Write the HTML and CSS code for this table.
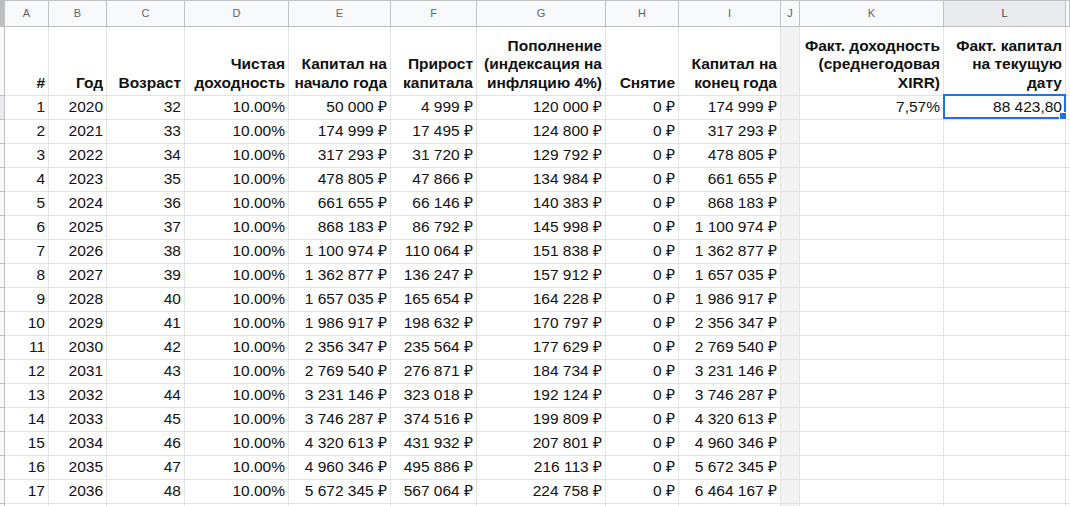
FILE: index.html
```html
<!DOCTYPE html>
<html lang="ru">
<head>
<meta charset="utf-8">
<title>Sheet</title>
<link rel="stylesheet" href="styles.css">
</head>
<body>
<div class="sheet">
  <div class="row colhead">
    <div class="strip"></div>
    <div class="cell">A</div><div class="cell">B</div><div class="cell">C</div><div class="cell">D</div>
    <div class="cell">E</div><div class="cell">F</div><div class="cell">G</div><div class="cell">H</div>
    <div class="cell">I</div><div class="cell">J</div><div class="cell">K</div><div class="cell active">L</div>
    <div class="cell"></div>
  </div>
  <div class="row title">
    <div class="strip"></div>
    <div class="cell">#</div>
    <div class="cell">Год</div>
    <div class="cell">Возраст</div>
    <div class="cell">Чистая<br>доходность</div>
    <div class="cell">Капитал на<br>начало года</div>
    <div class="cell">Прирост<br>капитала</div>
    <div class="cell">Пополнение<br>(индексация на<br>инфляцию 4%)</div>
    <div class="cell">Снятие</div>
    <div class="cell">Капитал на<br>конец года</div>
    <div class="cell gap"></div>
    <div class="cell">Факт. доходность<br>(среднегодовая<br>XIRR)</div>
    <div class="cell">Факт. капитал<br>на текущую<br>дату</div>
    <div class="cell"></div>
  </div>
  <div class="row data">
    <div class="strip sel"></div>
    <div class="cell">1</div><div class="cell">2020</div><div class="cell">32</div><div class="cell">10.00%</div>
    <div class="cell">50 000 ₽</div><div class="cell">4 999 ₽</div><div class="cell">120 000 ₽</div><div class="cell">0 ₽</div>
    <div class="cell">174 999 ₽</div><div class="cell gap"></div><div class="cell">7,57%</div>
    <div class="cell selected">88 423,80<span class="selbox"><span class="handle"></span></span></div>
    <div class="cell"></div>
  </div>
  <div class="row data">
    <div class="strip"></div>
    <div class="cell">2</div><div class="cell">2021</div><div class="cell">33</div><div class="cell">10.00%</div>
    <div class="cell">174 999 ₽</div><div class="cell">17 495 ₽</div><div class="cell">124 800 ₽</div><div class="cell">0 ₽</div>
    <div class="cell">317 293 ₽</div><div class="cell gap"></div><div class="cell"></div><div class="cell"></div><div class="cell"></div>
  </div>
  <div class="row data">
    <div class="strip"></div>
    <div class="cell">3</div><div class="cell">2022</div><div class="cell">34</div><div class="cell">10.00%</div>
    <div class="cell">317 293 ₽</div><div class="cell">31 720 ₽</div><div class="cell">129 792 ₽</div><div class="cell">0 ₽</div>
    <div class="cell">478 805 ₽</div><div class="cell gap"></div><div class="cell"></div><div class="cell"></div><div class="cell"></div>
  </div>
  <div class="row data">
    <div class="strip"></div>
    <div class="cell">4</div><div class="cell">2023</div><div class="cell">35</div><div class="cell">10.00%</div>
    <div class="cell">478 805 ₽</div><div class="cell">47 866 ₽</div><div class="cell">134 984 ₽</div><div class="cell">0 ₽</div>
    <div class="cell">661 655 ₽</div><div class="cell gap"></div><div class="cell"></div><div class="cell"></div><div class="cell"></div>
  </div>
  <div class="row data">
    <div class="strip"></div>
    <div class="cell">5</div><div class="cell">2024</div><div class="cell">36</div><div class="cell">10.00%</div>
    <div class="cell">661 655 ₽</div><div class="cell">66 146 ₽</div><div class="cell">140 383 ₽</div><div class="cell">0 ₽</div>
    <div class="cell">868 183 ₽</div><div class="cell gap"></div><div class="cell"></div><div class="cell"></div><div class="cell"></div>
  </div>
  <div class="row data">
    <div class="strip"></div>
    <div class="cell">6</div><div class="cell">2025</div><div class="cell">37</div><div class="cell">10.00%</div>
    <div class="cell">868 183 ₽</div><div class="cell">86 792 ₽</div><div class="cell">145 998 ₽</div><div class="cell">0 ₽</div>
    <div class="cell">1 100 974 ₽</div><div class="cell gap"></div><div class="cell"></div><div class="cell"></div><div class="cell"></div>
  </div>
  <div class="row data">
    <div class="strip"></div>
    <div class="cell">7</div><div class="cell">2026</div><div class="cell">38</div><div class="cell">10.00%</div>
    <div class="cell">1 100 974 ₽</div><div class="cell">110 064 ₽</div><div class="cell">151 838 ₽</div><div class="cell">0 ₽</div>
    <div class="cell">1 362 877 ₽</div><div class="cell gap"></div><div class="cell"></div><div class="cell"></div><div class="cell"></div>
  </div>
  <div class="row data">
    <div class="strip"></div>
    <div class="cell">8</div><div class="cell">2027</div><div class="cell">39</div><div class="cell">10.00%</div>
    <div class="cell">1 362 877 ₽</div><div class="cell">136 247 ₽</div><div class="cell">157 912 ₽</div><div class="cell">0 ₽</div>
    <div class="cell">1 657 035 ₽</div><div class="cell gap"></div><div class="cell"></div><div class="cell"></div><div class="cell"></div>
  </div>
  <div class="row data">
    <div class="strip"></div>
    <div class="cell">9</div><div class="cell">2028</div><div class="cell">40</div><div class="cell">10.00%</div>
    <div class="cell">1 657 035 ₽</div><div class="cell">165 654 ₽</div><div class="cell">164 228 ₽</div><div class="cell">0 ₽</div>
    <div class="cell">1 986 917 ₽</div><div class="cell gap"></div><div class="cell"></div><div class="cell"></div><div class="cell"></div>
  </div>
  <div class="row data">
    <div class="strip"></div>
    <div class="cell">10</div><div class="cell">2029</div><div class="cell">41</div><div class="cell">10.00%</div>
    <div class="cell">1 986 917 ₽</div><div class="cell">198 632 ₽</div><div class="cell">170 797 ₽</div><div class="cell">0 ₽</div>
    <div class="cell">2 356 347 ₽</div><div class="cell gap"></div><div class="cell"></div><div class="cell"></div><div class="cell"></div>
  </div>
  <div class="row data">
    <div class="strip"></div>
    <div class="cell">11</div><div class="cell">2030</div><div class="cell">42</div><div class="cell">10.00%</div>
    <div class="cell">2 356 347 ₽</div><div class="cell">235 564 ₽</div><div class="cell">177 629 ₽</div><div class="cell">0 ₽</div>
    <div class="cell">2 769 540 ₽</div><div class="cell gap"></div><div class="cell"></div><div class="cell"></div><div class="cell"></div>
  </div>
  <div class="row data">
    <div class="strip"></div>
    <div class="cell">12</div><div class="cell">2031</div><div class="cell">43</div><div class="cell">10.00%</div>
    <div class="cell">2 769 540 ₽</div><div class="cell">276 871 ₽</div><div class="cell">184 734 ₽</div><div class="cell">0 ₽</div>
    <div class="cell">3 231 146 ₽</div><div class="cell gap"></div><div class="cell"></div><div class="cell"></div><div class="cell"></div>
  </div>
  <div class="row data">
    <div class="strip"></div>
    <div class="cell">13</div><div class="cell">2032</div><div class="cell">44</div><div class="cell">10.00%</div>
    <div class="cell">3 231 146 ₽</div><div class="cell">323 018 ₽</div><div class="cell">192 124 ₽</div><div class="cell">0 ₽</div>
    <div class="cell">3 746 287 ₽</div><div class="cell gap"></div><div class="cell"></div><div class="cell"></div><div class="cell"></div>
  </div>
  <div class="row data">
    <div class="strip"></div>
    <div class="cell">14</div><div class="cell">2033</div><div class="cell">45</div><div class="cell">10.00%</div>
    <div class="cell">3 746 287 ₽</div><div class="cell">374 516 ₽</div><div class="cell">199 809 ₽</div><div class="cell">0 ₽</div>
    <div class="cell">4 320 613 ₽</div><div class="cell gap"></div><div class="cell"></div><div class="cell"></div><div class="cell"></div>
  </div>
  <div class="row data">
    <div class="strip"></div>
    <div class="cell">15</div><div class="cell">2034</div><div class="cell">46</div><div class="cell">10.00%</div>
    <div class="cell">4 320 613 ₽</div><div class="cell">431 932 ₽</div><div class="cell">207 801 ₽</div><div class="cell">0 ₽</div>
    <div class="cell">4 960 346 ₽</div><div class="cell gap"></div><div class="cell"></div><div class="cell"></div><div class="cell"></div>
  </div>
  <div class="row data">
    <div class="strip"></div>
    <div class="cell">16</div><div class="cell">2035</div><div class="cell">47</div><div class="cell">10.00%</div>
    <div class="cell">4 960 346 ₽</div><div class="cell">495 886 ₽</div><div class="cell">216 113 ₽</div><div class="cell">0 ₽</div>
    <div class="cell">5 672 345 ₽</div><div class="cell gap"></div><div class="cell"></div><div class="cell"></div><div class="cell"></div>
  </div>
  <div class="row data">
    <div class="strip"></div>
    <div class="cell">17</div><div class="cell">2036</div><div class="cell">48</div><div class="cell">10.00%</div>
    <div class="cell">5 672 345 ₽</div><div class="cell">567 064 ₽</div><div class="cell">224 758 ₽</div><div class="cell">0 ₽</div>
    <div class="cell">6 464 167 ₽</div><div class="cell gap"></div><div class="cell"></div><div class="cell"></div><div class="cell"></div>
  </div>
  <div class="row data">
    <div class="strip"></div>
    <div class="cell"></div><div class="cell"></div><div class="cell"></div><div class="cell"></div>
    <div class="cell"></div><div class="cell"></div><div class="cell"></div><div class="cell"></div>
    <div class="cell"></div><div class="cell gap"></div><div class="cell"></div><div class="cell"></div><div class="cell"></div>
  </div>
</div>
</body>
</html>
```
FILE: styles.css
```css
html, body {
  margin: 0;
  padding: 0;
  background: #ffffff;
  overflow: hidden;
}

.sheet {
  width: 1070px;
  height: 506px;
  overflow: hidden;
  font-family: "Liberation Sans", Arial, sans-serif;
  color: #111111;
}

.row {
  display: grid;
  grid-template-columns: 5px 44px 58px 78px 104px 102px 86px 129px 73px 102px 19px 144px 122px 1fr;
}

.cell {
  box-sizing: border-box;
  border-right: 1px solid #e2e3e3;
  border-bottom: 1px solid #e2e3e3;
  display: flex;
  align-items: flex-end;
  justify-content: flex-end;
  text-align: right;
  padding: 0 3px 4px 2px;
  font-size: 15.5px;
  line-height: 17px;
  white-space: nowrap;
  overflow: hidden;
}

.strip {
  box-sizing: border-box;
  background: #f8f9fa;
  border-right: 1px solid #c0c0c0;
  border-bottom: 1px solid #c0c0c0;
}

.strip.sel {
  background: #e8eaed;
}

.colhead {
  height: 27px;
}

.colhead .strip {
  background: #bdbdbd;
  border-top: 1px solid #c0c0c0;
}

.colhead .cell {
  background: #f8f9fa;
  border-top: 1px solid #c0c0c0;
  border-right-color: #c0c0c0;
  border-bottom-color: #c0c0c0;
  justify-content: center;
  align-items: center;
  padding: 0;
  font-size: 11px;
  color: #5f6368;
}

.colhead .cell.active {
  background: #e8eaed;
  color: #3c4043;
}

.title {
  height: 69px;
}

.title .cell {
  font-weight: bold;
  line-height: 18.5px;
  padding-bottom: 3px;
  color: #111111;
}

.data {
  height: 24px;
}

.gap {
  background: #f3f3f3;
}

.selected {
  position: relative;
  overflow: visible;
}

.selbox {
  position: absolute;
  top: -2px;
  left: -1px;
  right: -1px;
  bottom: 0;
  border: 2px solid #1a73e8;
  z-index: 2;
}

.handle {
  position: absolute;
  right: -3px;
  bottom: -3px;
  width: 6px;
  height: 6px;
  background: #1a73e8;
  border: 1px solid #ffffff;
  box-sizing: content-box;
}
```
